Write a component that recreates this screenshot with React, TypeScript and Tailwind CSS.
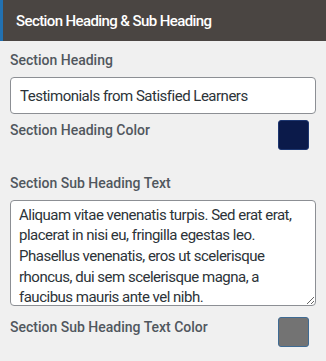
import React from "react";

const font = { fontFamily: "Roboto, 'Noto Sans', sans-serif" };

export default function App() {
  const subText =
    "Aliquam vitae venenatis turpis. Sed erat erat,\nplacerat in nisi eu, fringilla egestas leo.\nPhasellus venenatis, eros ut scelerisque\nrhoncus, dui sem scelerisque magna, a\nfaucibus mauris ante vel nibh.";
  return (
    <div className="w-[326px] h-[361px] bg-[#f0f0f0] overflow-hidden font-['Roboto',sans-serif]" style={font}>
      <div className="h-[41px] bg-[#4a4542] border-l-[3px] border-[#2271b1] pl-[13px] flex items-center">
        <span className="text-white text-[15px] font-medium leading-5 tracking-[-0.6px]">
          Section Heading &amp; Sub Heading
        </span>
      </div>
      <div className="px-[10px] pt-[9px] flex flex-col">
        <label className="text-[14px] leading-5 font-medium text-[#50575e]">Section Heading</label>
        <div className="mt-[7px] h-[37px] border border-[#8c8f94] rounded-[4px] bg-white flex items-center pl-[9px]">
          <span className="text-[15px] leading-5 tracking-[-0.5px] text-[#2c3338]">Testimonials from Satisfied Learners</span>
        </div>
        <div className="mt-[6px] flex justify-between items-start">
          <label className="text-[14px] leading-5 font-medium text-[#50575e]">Section Heading Color</label>
          <div className="mr-[7px] w-[31px] h-[30px] rounded-[3px] bg-[#0b1a4a] border border-[#1d3670]" />
        </div>
        <label className="mt-[23px] text-[14px] leading-5 font-medium text-[#50575e]">Section Sub Heading Text</label>
        <textarea
          readOnly
          value={subText}
          className="mt-[7px] h-[106px] w-full border border-[#8c8f94] rounded-[4px] bg-white px-[8px] pt-[3.5px] text-[15px] leading-[20.7px] tracking-[-0.5px] text-[#2c3338] whitespace-pre overflow-hidden outline-none"
          style={font}
        />
        <div className="mt-[11px] flex justify-between items-start">
          <label className="text-[14px] leading-5 font-medium text-[#50575e]">Section Sub Heading Text Color</label>
          <div className="mr-[7px] w-[31px] h-[30px] rounded-[3px] bg-[#737373] border border-[#3e6b94]" />
        </div>
      </div>
    </div>
  );
}
